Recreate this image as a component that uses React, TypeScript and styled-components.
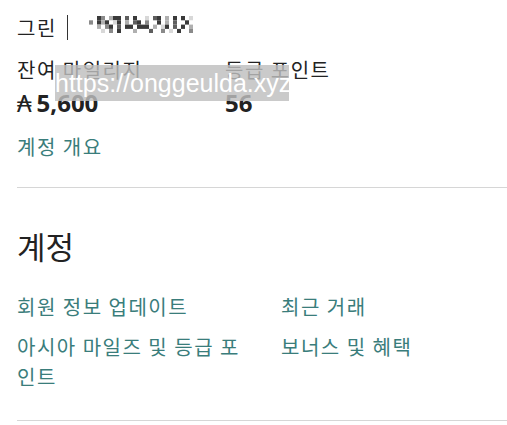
import React from "react";
import styled, { createGlobalStyle } from "styled-components";

const GlobalStyle = createGlobalStyle`
  body {
    margin: 0;
    background: #fff;
    font-family: "Noto Sans CJK KR", "Noto Sans", sans-serif;
    color: #222;
  }
`;

const Page = styled.div`
  position: relative;
  padding: 8px 0 0 17px;
`;

const Header = styled.div`
  display: flex;
  align-items: center;
  height: 38px;
  font-size: 20px;
  letter-spacing: 1.5px;
`;

const Tier = styled.span`
  padding-right: 10px;
  margin-right: 21px;
  border-right: 1px solid #333;
  line-height: 25px;
`;

const Stats = styled.div`
  display: grid;
  grid-template-columns: 208px 1fr;
  margin-top: 9px;
`;

const Stat = styled.div`
  display: flex;
  flex-direction: column;
`;

const Label = styled.span`
  font-size: 20px;
  letter-spacing: 1.5px;
  line-height: 30px;
`;

const Value = styled.span`
  font-size: 24px;
  font-weight: 700;
  line-height: 36px;
  font-family: "Open Sans", "Noto Sans", sans-serif;
`;

const Currency = styled.span`
  font-weight: 400;
  margin-right: 5px;
`;

const Link = styled.a`
  color: #3a7d7b;
  font-size: 20px;
  letter-spacing: 1.5px;
  text-decoration: none;
  line-height: 30px;
`;

const Overview = styled.div`
  margin-top: 11px;
  padding-bottom: 25px;
  border-bottom: 1px solid #d6d6d6;
`;

const Heading = styled.h2`
  margin: 38px 0 26px;
  font-size: 31px;
  font-weight: 400;
  line-height: 40px;
`;

const LinkGrid = styled.div`
  display: grid;
  grid-template-columns: 242px 1fr;
  column-gap: 22px;
  row-gap: 10px;
  padding-bottom: 28px;
  border-bottom: 1px solid #d6d6d6;
`;

const Watermark = styled.div`
  position: absolute;
  left: 55px;
  top: 65px;
  width: 234px;
  height: 36px;
  background: rgba(190, 190, 190, 0.82);
  color: #fff;
  font-family: "Liberation Sans", Arial, sans-serif;
  font-size: 25px;
  line-height: 36px;
  white-space: nowrap;
  overflow: hidden;
`;

const cells = [
  "..#a.b##.c.#..d.c#.b.#.#.d.",
  "a.#b#.d#.b.c#.a..#.b.c..#..",
  "..b.a#.c.##.###.b.d#.c.#.b.",
  "...d.a.#...b...c..a.d.#..a.",
];
const shade: Record<string, string> = {
  "#": "#3a3a3a",
  a: "#8a8a8a",
  b: "#b0b0b0",
  c: "#5e5e5e",
  d: "#d8d8d8",
};

const Masked = () => (
  <svg width="108" height="17" viewBox="0 0 108 17" style={{ marginBottom: 6 }}>
    {cells.flatMap((row, y) =>
      row.split("").map((ch, x) =>
        shade[ch] ? (
          <rect key={`${x}-${y}`} x={x * 4} y={y * 4.3} width="4" height="4.3" fill={shade[ch]} />
        ) : null
      )
    )}
  </svg>
);

export default function App() {
  return (
    <>
      <GlobalStyle />
      <Page>
        <Header>
          <Tier>그린</Tier>
          <Masked />
        </Header>
        <Stats>
          <Stat>
            <Label>잔여 마일리지</Label>
            <Value>
              <Currency>₳</Currency>5,600
            </Value>
          </Stat>
          <Stat>
            <Label>등급 포인트</Label>
            <Value>56</Value>
          </Stat>
        </Stats>
        <Overview>
          <Link href="#">계정 개요</Link>
        </Overview>
        <Heading>계정</Heading>
        <LinkGrid>
          <Link href="#">회원 정보 업데이트</Link>
          <Link href="#">최근 거래</Link>
          <Link href="#">아시아 마일즈 및 등급 포인트</Link>
          <Link href="#">보너스 및 혜택</Link>
        </LinkGrid>
        <Watermark>https://onggeulda.xyz</Watermark>
      </Page>
    </>
  );
}
